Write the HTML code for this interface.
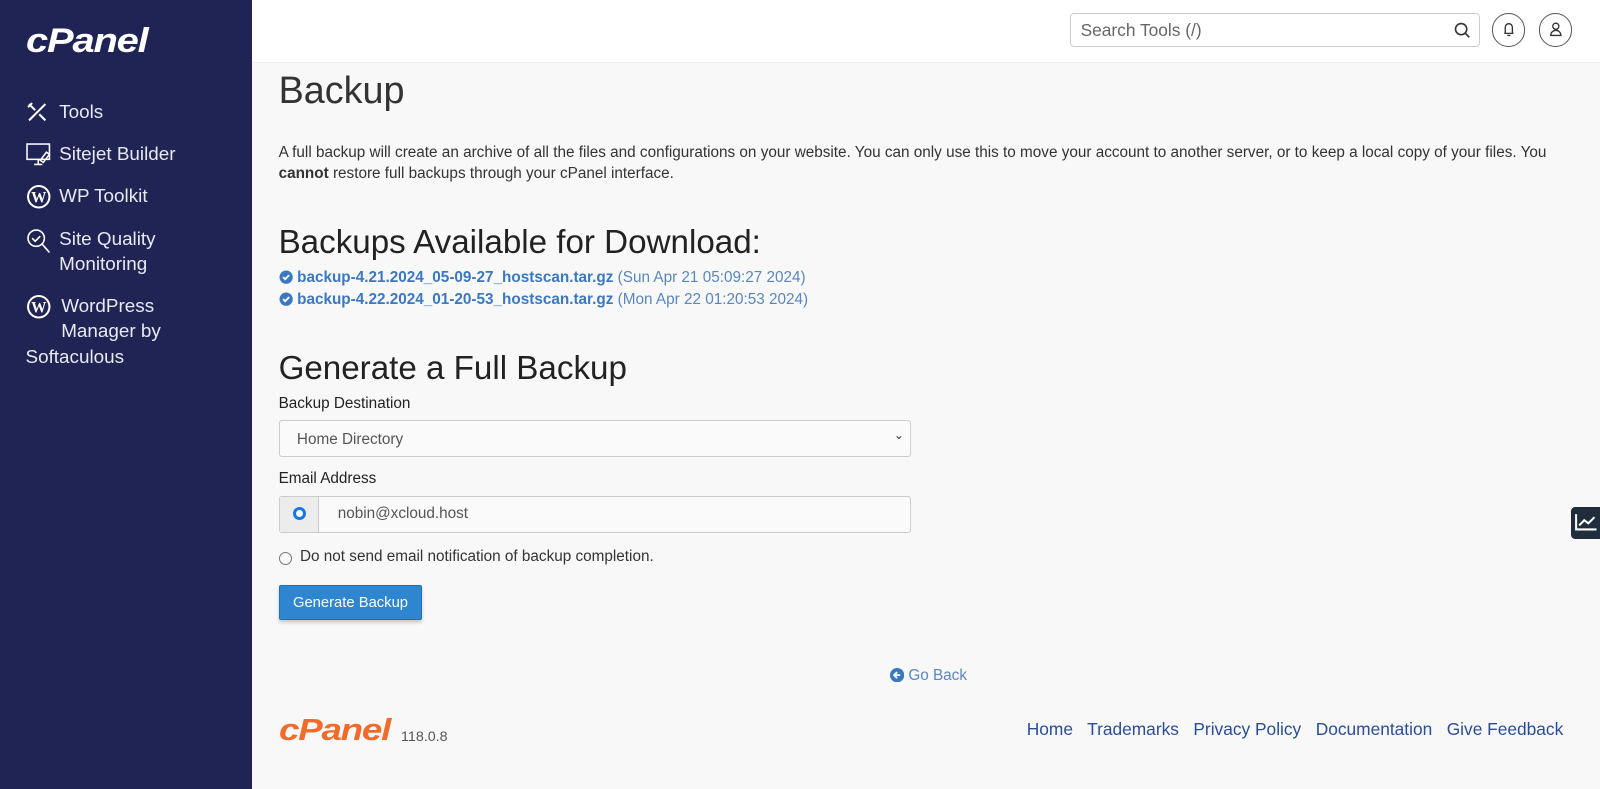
<!DOCTYPE html>
<html><head><meta charset="utf-8"><style>
*{box-sizing:border-box;margin:0;padding:0}
html{background:#f8f8f8}
body{width:1568px;height:758px;overflow:hidden;font-family:"Liberation Sans",sans-serif;background:#f8f8f8;position:relative;color:#333;zoom:1.0204}
.sb{position:absolute;left:0;top:0;width:247px;height:773px;background:#1f2454;color:#e8eaf2}
.logo{position:absolute;font-style:italic;font-weight:bold;letter-spacing:-1px;transform-origin:0 0}
.nav{position:absolute;left:25px;font-size:18.5px;line-height:25px}
.nav svg{position:absolute;left:0}
.hdr{position:absolute;left:247px;top:0;right:0;height:62px;background:#fff;border-bottom:1px solid #eee}
.a{position:absolute}
a{color:#3a78c2;text-decoration:none}
</style></head><body>
<div class="sb">
<div class="logo" style="left:25px;top:22px;font-size:34px;color:#fff;transform:scaleX(1.15)">cPanel</div>
<div class="nav" style="top:97px"><svg width="22" height="22" viewBox="0 0 22 22" style="top:2px" stroke="#fff" stroke-width="2" fill="none"><path d="M3 19L19 3M3 3l6 6M13 13l6 6M2 6l4-4"/></svg><span style="margin-left:33px">Tools</span></div>
<div class="nav" style="top:138px"><svg width="26" height="26" viewBox="0 0 26 26" style="top:1px" stroke="#fff" stroke-width="1.5" fill="none"><rect x="1" y="2" width="22" height="15"/><path d="M8 22h8M12 17v5M14 18l6-8 3 2-6 8z"/></svg><span style="margin-left:33px">Sitejet Builder</span></div>
<div class="nav" style="top:179px"><svg width="25" height="25" viewBox="0 0 25 25" style="top:1px"><circle cx="12.5" cy="12.5" r="11.5" fill="#fff"/><circle cx="12.5" cy="12.5" r="9.5" fill="#1f2454"/><text x="12.5" y="18" font-size="15" font-weight="bold" font-family="Liberation Serif" fill="#fff" text-anchor="middle">W</text></svg><span style="margin-left:33px">WP Toolkit</span></div>
<div class="nav" style="top:221px"><svg width="26" height="28" viewBox="0 0 26 28" style="top:2px" stroke="#fff" stroke-width="1.6" fill="none"><circle cx="10" cy="10" r="8"/><path d="M6 10l3 3 5-5M16 16l7 8"/></svg><span style="margin-left:33px">Site Quality<br><span style="margin-left:33px">Monitoring</span></span></div>
<div class="nav" style="top:287px"><svg width="25" height="25" viewBox="0 0 25 25" style="top:1px"><circle cx="12.5" cy="12.5" r="11.5" fill="#fff"/><circle cx="12.5" cy="12.5" r="9.5" fill="#1f2454"/><text x="12.5" y="18" font-size="15" font-weight="bold" font-family="Liberation Serif" fill="#fff" text-anchor="middle">W</text></svg><span style="margin-left:35px">WordPress</span><br><span style="margin-left:35px">Manager by</span><br>Softaculous</div>
</div>
<div class="hdr">
<div class="a" style="left:802px;top:13px;width:401px;height:33px;border:1px solid #ccc;border-radius:4px;font-size:17px;color:#666;padding:6px 9px">Search Tools (/)
<svg class="a" style="right:8px;top:8px" width="16" height="16" viewBox="0 0 16 16" stroke="#333" stroke-width="1.6" fill="none"><circle cx="7" cy="7" r="5.5"/><path d="M11 11l4 4"/></svg></div>
<div class="a" style="left:1215px;top:13px;width:33px;height:33px;border:1px solid #555;border-radius:50%"><svg width="31" height="31" viewBox="0 0 31 31" stroke="#333" stroke-width="1.3" fill="none"><path d="M11 19h9M12 19v-6a3.5 3.5 0 017 0v6M14 21h3"/></svg></div>
<div class="a" style="left:1261px;top:13px;width:33px;height:33px;border:1px solid #555;border-radius:50%"><svg width="31" height="31" viewBox="0 0 31 31" stroke="#333" stroke-width="1.3" fill="none"><circle cx="15.5" cy="12" r="3"/><path d="M10.5 21a5 5 0 0110 0z"/></svg></div>
</div>
<div class="a" style="left:273px;top:68px;font-size:37px;color:#333;font-weight:300">Backup</div>
<div class="a" style="left:273px;top:139px;width:1275px;font-size:15px;line-height:21px">A full backup will create an archive of all the files and configurations on your website. You can only use this to move your account to another server, or to keep a local copy of your files. You <b>cannot</b> restore full backups through your cPanel interface.</div>
<div class="a" style="left:273px;top:220px;font-size:32.5px;color:#222">Backups Available for Download:</div>
<div class="a" style="left:273px;top:262px;font-size:15px;line-height:21px">
<div><svg width="14" height="14" viewBox="0 0 14 14" style="vertical-align:-2px"><circle cx="7" cy="7" r="6.5" fill="#3a78c2"/><path d="M4 7l2 2 4-4" stroke="#fff" stroke-width="1.8" fill="none"/></svg> <a style="font-weight:bold">backup-4.21.2024_05-09-27_hostscan.tar.gz</a> <span style="color:#5a86c0">(Sun Apr 21 05:09:27 2024)</span></div>
<div><svg width="14" height="14" viewBox="0 0 14 14" style="vertical-align:-2px"><circle cx="7" cy="7" r="6.5" fill="#3a78c2"/><path d="M4 7l2 2 4-4" stroke="#fff" stroke-width="1.8" fill="none"/></svg> <a style="font-weight:bold">backup-4.22.2024_01-20-53_hostscan.tar.gz</a> <span style="color:#5a86c0">(Mon Apr 22 01:20:53 2024)</span></div>
</div>
<div class="a" style="left:273px;top:343px;font-size:32.5px;color:#222">Generate a Full Backup</div>
<div class="a" style="left:273px;top:387px;font-size:15px;color:#222">Backup Destination</div>
<div class="a" style="left:273px;top:412px;width:620px;height:36px;border:1px solid #ccc;border-radius:3px;background:#fafafa;font-size:15px;color:#555;padding:9px 17px">Home Directory<span style="position:absolute;right:6px;top:6px;font-size:12px;color:#333">&#8964;</span></div>
<div class="a" style="left:273px;top:461px;font-size:15px;color:#222">Email Address</div>
<div class="a" style="left:273px;top:486px;width:620px;height:36px;border:1px solid #ccc;border-radius:3px;background:#fafafa">
<div class="a" style="left:0;top:0;width:39px;height:34px;background:#ececec;border-right:1px solid #ccc"><div class="a" style="left:13px;top:10px;width:13px;height:13px;border-radius:50%;border:3px solid #1a73e8;background:#fff"></div></div>
<div class="a" style="left:57px;top:8px;font-size:15px;color:#555">nobin@xcloud.host</div></div>
<div class="a" style="left:273px;top:541px;width:13px;height:13px;border:1px solid #777;border-radius:50%"></div>
<div class="a" style="left:294px;top:537px;font-size:15px;color:#333">Do not send email notification of backup completion.</div>
<div class="a" style="left:273px;top:573px;width:141px;height:35px;background:#2e86d0;border:1px solid #2470b0;border-radius:2px;color:#fff;font-size:14.5px;padding:9px 0;text-align:center;white-space:nowrap;box-shadow:0 2px 3px rgba(0,0,0,.2)">Generate Backup</div>
<div class="a" style="left:872px;top:654px;font-size:15px"><svg width="14" height="14" viewBox="0 0 14 14" style="vertical-align:-2px"><circle cx="7" cy="7" r="7" fill="#3a78c2"/><path d="M10 7H4M7 4L4 7l3 3" stroke="#fff" stroke-width="1.8" fill="none"/></svg> <a style="color:#5a86c0">Go Back</a></div>
<div class="logo" style="left:273px;top:699px;font-size:30px;color:#f26b2a;transform:scaleX(1.2)">cPanel</div>
<div class="a" style="left:393px;top:714px;font-size:14px;color:#555">118.0.8</div>
<div class="a" style="right:36px;top:705px;font-size:17px;color:#2a4d99"><span>Home</span>&nbsp;&nbsp; <span>Trademarks</span>&nbsp;&nbsp; <span>Privacy Policy</span>&nbsp;&nbsp; <span>Documentation</span>&nbsp;&nbsp; <span>Give Feedback</span></div>
<div class="a" style="left:1540px;top:497px;width:30px;height:31px;background:#1f2d3d;border-radius:4px 0 0 4px"><svg width="30" height="31" viewBox="0 0 30 31" stroke="#fff" stroke-width="2" fill="none"><path d="M5 7v15h20M8 18l5-5 4 3 6-6"/></svg></div>
</body></html>
